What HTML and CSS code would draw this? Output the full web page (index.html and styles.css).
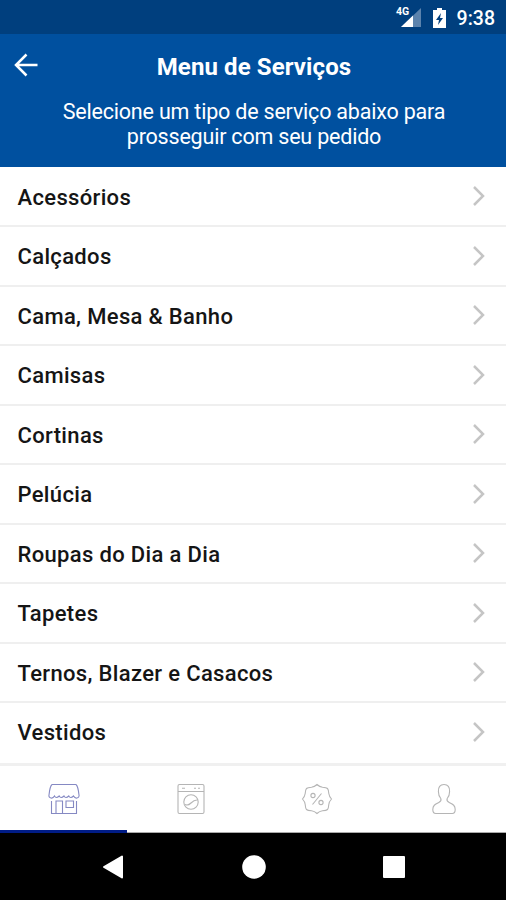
FILE: index.html
```html
<!DOCTYPE html>
<html lang="pt-BR">
<head>
<meta charset="utf-8">
<title>Menu de Serviços</title>
<link rel="stylesheet" href="styles.css">
</head>
<body>
<div class="status">
  <svg class="signal" width="28" height="24" viewBox="0 0 28 24"><path d="M27 3v19H7z" fill="#5c83ad"/><path d="M19 10.500v11.500H7z" fill="#fff"/></svg>
  <span class="network">4G</span>
  <svg class="battery" width="15" height="22" viewBox="0 0 15 22"><path d="M1 3h4V1h5v2h4v18H1z" fill="#fff"/><path d="M9 6 4 13h3l-1 5 5-7H8z" fill="#003f7e"/></svg>
  <span class="clock">9:38</span>
</div>
<header class="header">
  <div class="bar">
    <svg class="back" width="24" height="24" viewBox="0 0 24 24"><path d="M23.500 12H2M12.500 1.500 2 12 12.500 22.500" fill="none" stroke="#fff" stroke-width="2.500"/></svg>
    <h1>Menu de Serviços</h1>
  </div>
  <p>Selecione um tipo de serviço abaixo para<br>prosseguir com seu pedido</p>
</header>
<ul class="list">
  <li><span>Acessórios</span><svg viewBox="0 0 14 22"><path d="m2 2 9 9-9 9"/></svg></li>
  <li><span>Calçados</span><svg viewBox="0 0 14 22"><path d="m2 2 9 9-9 9"/></svg></li>
  <li><span>Cama, Mesa &amp; Banho</span><svg viewBox="0 0 14 22"><path d="m2 2 9 9-9 9"/></svg></li>
  <li><span>Camisas</span><svg viewBox="0 0 14 22"><path d="m2 2 9 9-9 9"/></svg></li>
  <li><span>Cortinas</span><svg viewBox="0 0 14 22"><path d="m2 2 9 9-9 9"/></svg></li>
  <li><span>Pelúcia</span><svg viewBox="0 0 14 22"><path d="m2 2 9 9-9 9"/></svg></li>
  <li><span>Roupas do Dia a Dia</span><svg viewBox="0 0 14 22"><path d="m2 2 9 9-9 9"/></svg></li>
  <li><span>Tapetes</span><svg viewBox="0 0 14 22"><path d="m2 2 9 9-9 9"/></svg></li>
  <li><span>Ternos, Blazer e Casacos</span><svg viewBox="0 0 14 22"><path d="m2 2 9 9-9 9"/></svg></li>
  <li><span>Vestidos</span><svg viewBox="0 0 14 22"><path d="m2 2 9 9-9 9"/></svg></li>
</ul>
<nav class="tabs">
  <div class="tab active"><svg viewBox="0 0 32 32"><path d="M4 1.500Q2 3 1 12q-.5 2.500 2 3M28 1.500q2 1.500 3 10.500.5 2.500-2 3M4 1.500h24"/><path d="M3 15q2 .5 3.500-2 1.500 3 4.700 0 1.600 3 4.800 0 1.600 3 4.800 0 1.600 3 4.700 0 1.500 2.500 3.500 2"/><path d="M3.500 18v12.500h25V18M8 30V18h6.500v12M18 18h7.500v6.500H18z"/></svg></div>
  <div class="tab"><svg viewBox="0 0 32 32"><rect x="3" y="1.500" width="26" height="29" rx="1.500"/><path d="M3 8.500h26M7 5.200h3M19 5.200h2M23 5.200h2M10 21.500q3 1.500 6-1.500t6-3"/><circle cx="16" cy="19" r="7.200"/></svg></div>
  <div class="tab"><svg viewBox="0 0 32 32"><path d="M16 1.500q2.500 2.300 5.500 2.700 4 .3 5 1.300t1.300 5q.4 3 2.700 5.500-2.300 2.500-2.700 5.500-.3 4-1.300 5t-5 1.300q-3 .4-5.500 2.700-2.500-2.300-5.500-2.700-4-.3-5-1.300t-1.300-5Q3.800 18.500 1.500 16q2.300-2.500 2.700-5.500.3-4 1.300-5t5-1.300q3-.4 5.500-2.700z"/><path d="m20.500 10.500-9 11"/><circle cx="12" cy="12.500" r="2.100"/><circle cx="20" cy="19.500" r="2.100"/></svg></div>
  <div class="tab"><svg viewBox="0 0 32 32"><path d="M16 1.500c-4 0-5.800 2.500-5.600 7 0 3.500.6 5 2.400 7 .8 2 0 3-2 4-4 2-6 3-6 7 0 2.500 1 4 3 4h16.400c2 0 3-1.500 3-4 0-4-2-5-6-7-2-1-2.800-2-2-4 1.800-2 2.400-3.500 2.400-7C21.800 4 20 1.500 16 1.500z"/></svg></div>
</nav>
<div class="system">
  <svg width="22" height="24" viewBox="0 0 22 24"><path d="M20 1.500v21L2 12z" fill="#fff" stroke="#fff" stroke-width="2" stroke-linejoin="round"/></svg>
  <svg width="24" height="24" viewBox="0 0 24 24"><circle cx="12" cy="12" r="11.800" fill="#fff"/></svg>
  <svg width="22" height="22" viewBox="0 0 22 22"><rect width="22" height="22" rx="1" fill="#fff"/></svg>
</div>
</body>
</html>
```
FILE: styles.css
```css
* { box-sizing: border-box; }
body {
  margin: 0;
  width: 506px;
  height: 900px;
  overflow: hidden;
  display: flex;
  flex-direction: column;
  background: #fff;
  font-family: Roboto, "Liberation Sans", sans-serif;
}
.status {
  position: relative;
  height: 34px;
  flex: none;
  display: flex;
  justify-content: flex-end;
  align-items: center;
  padding-right: 11px;
  background: #003f7e;
  color: #fff;
}
.signal { margin: 0 10px 0 0; }
.network {
  position: absolute;
  left: 396px;
  top: 5px;
  font-size: 10.500px;
  line-height: 14px;
  font-weight: 700;
}
.battery { margin: 1px 10px 0 0; }
.clock { font-size: 19.500px; font-weight: 500; line-height: 34px; padding-top: 3px; }
.header {
  height: 133px;
  flex: none;
  background: #00509f;
  color: #fff;
  text-align: center;
}
.bar {
  height: 64px;
  display: grid;
  grid-template-columns: 50px 1fr 50px;
  align-items: center;
}
.back { margin: 0 0 2px 14px; }
h1 { margin: 0; padding: 1px 0 0 2px; font-size: 24px; line-height: 30px; font-weight: 700; letter-spacing: .1px; }
.header p { margin: 0; padding: 1px 0 0 2px; font-size: 21.500px; line-height: 25px; letter-spacing: -.2px; }
.list { margin: 0; padding: 0; list-style: none; flex: none; }
.list li {
  height: 59.500px;
  display: flex;
  align-items: center;
  justify-content: space-between;
  padding: 0 20px 0 17.500px;
  border-bottom: 2px solid #efefef;
  color: #151515;
  font-size: 22px;
  line-height: 28px;
  font-weight: 500;
  letter-spacing: .34px;
}
.list span { padding-top: 3px; }
.list svg { width: 14px; height: 22px; fill: none; stroke: #c5c5c5; stroke-width: 2.500; }
.list li:first-child { height: 60px; }
.list li:last-child { border-bottom-color: transparent; }
.tabs {
  flex: 1;
  display: grid;
  grid-template-columns: repeat(4, 1fr);
  border-top: 3px solid #f0f0f0;
  border-bottom: 1px solid #aaa;
}
.tab { display: flex; align-items: center; justify-content: center; padding: 0 0 0 2px; }
.tab svg { width: 32px; height: 32px; fill: none; stroke: #b5b5b5; stroke-width: 1.100; }
.tab.active { border-bottom: 3px solid #001c86; margin-bottom: -1px; padding-top: 3px; }
.tab.active svg { stroke: #8589c3; }
.system {
  height: 67px;
  flex: none;
  display: flex;
  align-items: center;
  justify-content: space-between;
  padding: 0 101px 0 102px;
  background: #000;
}
```
